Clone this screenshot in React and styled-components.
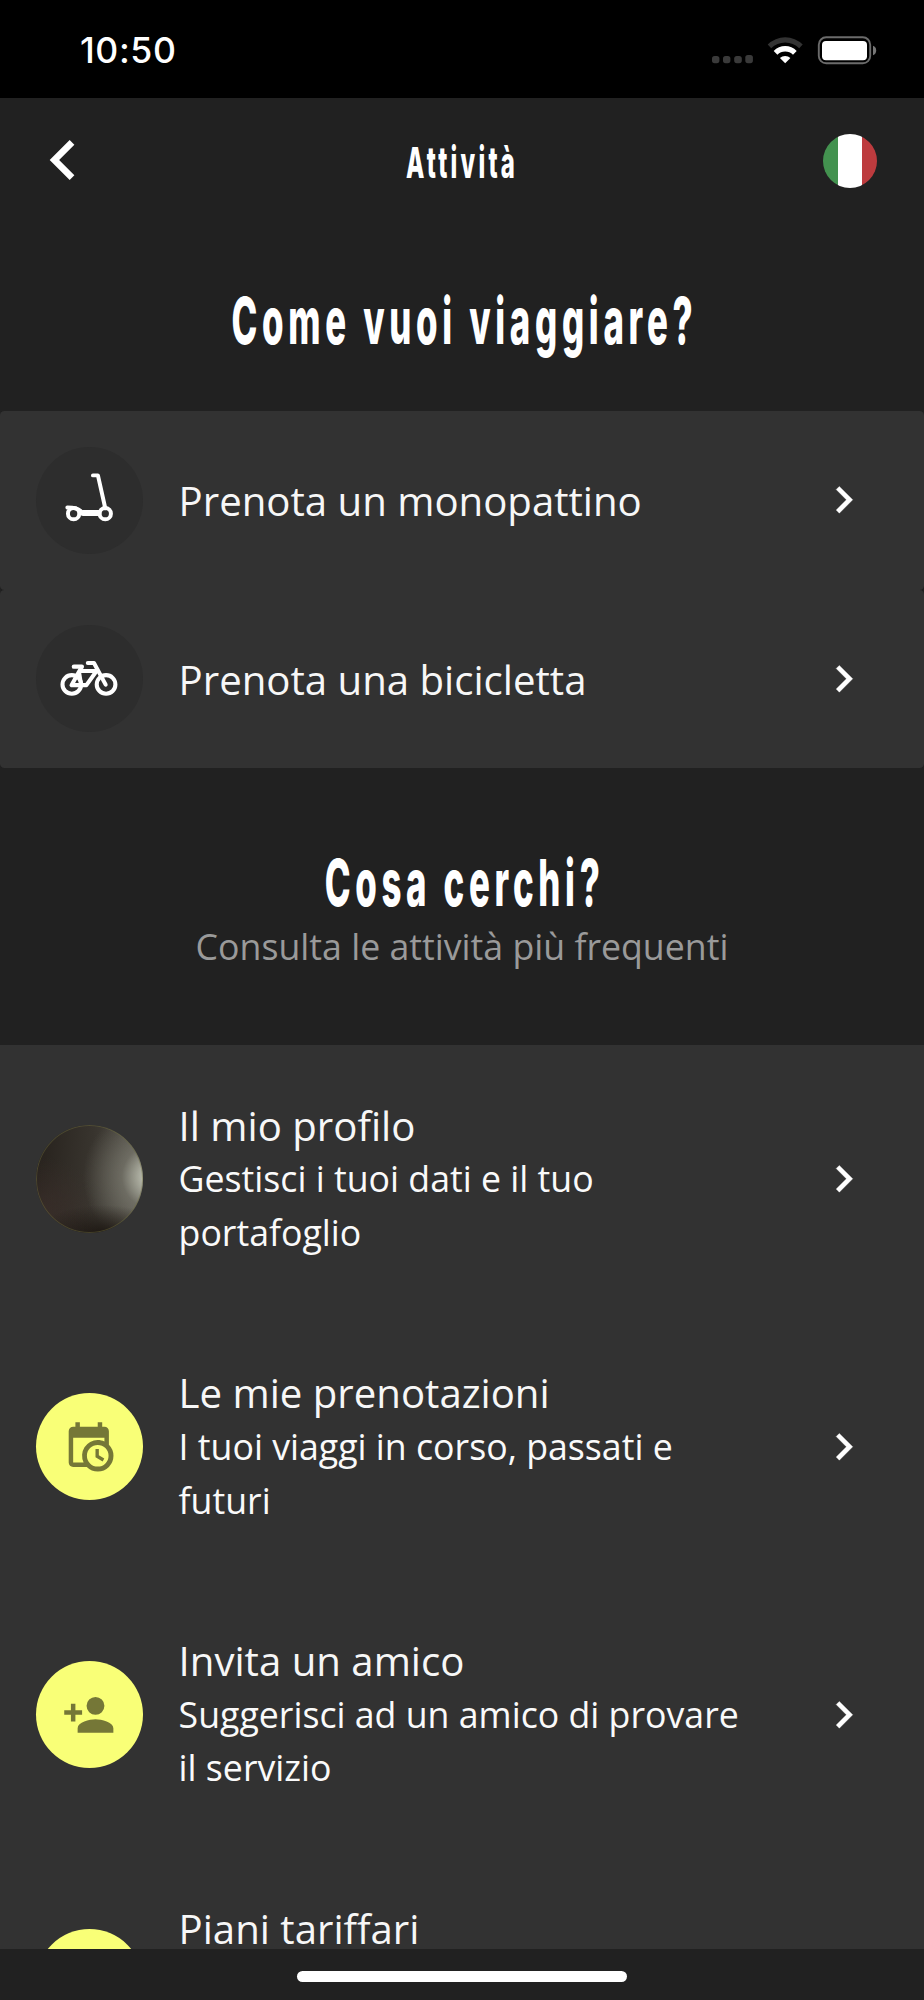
import React from 'react';
import styled, { createGlobalStyle } from 'styled-components';

const GlobalStyle = createGlobalStyle`
  body { margin: 0; background: #212121; }
  * { box-sizing: border-box; }
`;

const Screen = styled.div`
  width: 924px;
  height: 2000px;
  overflow: hidden;
  display: flex;
  flex-direction: column;
  background: #212121;
  color: #fff;
  font-family: 'Open Sans', sans-serif;
`;

const StatusBar = styled.div`
  flex: none;
  height: 98px;
  padding: 4px 47px 0 80px;
  display: flex;
  align-items: center;
  justify-content: space-between;
  background: #000;
`;

const Clock = styled.span`
  font: 550 35.6px/40px Inter, sans-serif;
  letter-spacing: 0.6px;
`;

const Header = styled.header`
  flex: none;
  height: 125px;
  padding: 0 47px 0 23px;
  display: grid;
  grid-template-columns: 80px 1fr 54px;
  align-items: center;
`;

const BackIcon = styled.svg`
  width: 80px;
  height: 80px;
  margin-top: -2px;
  display: block;
`;

const Condensed = styled.span`
  display: inline-block;
  white-space: nowrap;
  font-family: Inter, sans-serif;
  font-weight: 850;
  font-size: ${(p) => p.$size}px;
  line-height: ${(p) => p.$line}px;
  letter-spacing: ${(p) => p.$spacing}px;
  margin-right: ${(p) => -p.$spacing * p.$squeeze}px;
  transform: scaleX(${(p) => p.$squeeze});
`;

const HeaderTitle = styled.div`
  display: flex;
  justify-content: center;
  padding-top: 2px;
  margin-left: -5px;
`;

const Flag = styled.div`
  width: 54px;
  height: 54px;
  border-radius: 50%;
  background: linear-gradient(90deg, #43924f 15px, #fff 15px, #fff 39px, #bd3b3e 39px);
`;

const Section = styled.section`
  flex: none;
  height: ${(p) => p.$height}px;
  padding-top: ${(p) => p.$top}px;
  display: flex;
  flex-direction: column;
  align-items: center;
`;

const Hint = styled.p`
  margin: 2px 0 0;
  font-size: 35.7px;
  line-height: 53.6px;
  color: #9a9a9a;
`;

const Row = styled.div`
  flex: none;
  height: ${(p) => p.$height}px;
  padding: 0 53.6px 0 35.7px;
  display: flex;
  align-items: center;
  background: #323232;
  border-radius: ${(p) => (p.$rounded ? '4.5px' : '0')};
`;

const Badge = styled.div`
  flex: none;
  width: 107.2px;
  height: 107.2px;
  margin-right: 35.7px;
  border-radius: 50%;
  display: flex;
  align-items: center;
  justify-content: center;
  color: ${(p) => (p.$accent ? '#757737' : '#fff')};
  background: ${(p) => (p.$accent ? '#f9ff77' : '#2d2d2d')};
`;

const Avatar = styled(Badge)`
  box-shadow: inset 0 0 0 1px rgba(110, 108, 60, 0.45);
  background:
    radial-gradient(ellipse 62% 28% at 62% 102%, rgba(28, 22, 17, 0.9) 10%, rgba(28, 22, 17, 0)),
    radial-gradient(ellipse 66% 66% at 110% 48%, #c6c9ba 0%, #b4b6a8 16%, rgba(128, 127, 116, 0.65) 45%, rgba(75, 72, 64, 0) 100%),
    radial-gradient(circle at 8% 78%, rgba(60, 47, 43, 0.7), rgba(60, 47, 43, 0) 40%),
    linear-gradient(95deg, #26211c, #38342e 50%, #55534b);
`;

const Labels = styled.div`
  width: 583px;
  padding-top: ${(p) => (p.$single ? 2 : 0)}px;
  line-height: 53.57px;
`;

const Title = styled.div`
  font-size: 40.17px;
  color: #f7f7f7;
`;

const Detail = styled.div`
  min-height: 107.14px;
  font-size: 35.7px;
  color: #fafafa;
`;

const Glyph = styled.svg`
  flex: none;
  display: block;
  overflow: visible;
  width: 53.6px;
  height: 53.6px;
`;

const ChevronIcon = styled(Glyph)`
  margin-left: auto;
`;

const List = styled.div`
  flex: 1;
  min-height: 0;
  overflow: hidden;
  display: flex;
  flex-direction: column;
  background: #323232;
`;

const BottomBar = styled.footer`
  flex: none;
  height: 51.3px;
  padding-top: 22px;
  display: flex;
  justify-content: center;
  background: #212121;
`;

const HomeIndicator = styled.div`
  width: 330px;
  height: 11px;
  border-radius: 6px;
  background: #fff;
`;

const Chevron = () => (
  <ChevronIcon viewBox="0 0 24 24" fill="#fff" stroke="#fff" strokeWidth="0.15" strokeLinejoin="round">
    <path d="M8.59 16.58 13.17 12 8.59 7.41 10 6l6 6-6 6z" />
  </ChevronIcon>
);

const StatusIcons = () => (
  <svg width="166" height="30" viewBox="711 36 166 30">
    <g fill="#3a3a3a">
      <rect x="712" y="56" width="7.4" height="7.2" rx="2.6" />
      <rect x="723" y="56" width="7.4" height="7.2" rx="2.6" />
      <rect x="734.2" y="56" width="7.6" height="7.2" rx="2.6" />
      <rect x="745.3" y="55" width="7.6" height="8.2" rx="2.6" />
    </g>
    <path d="M767.7 44.6A24.8 24.8 0 0 1 802.7 44.6L799.2 48.2A19.8 19.8 0 0 0 771.2 48.2Z" fill="#333" />
    <path d="M773.7 50.9A16.2 16.2 0 0 1 796.7 50.9L793 54.8A11 11 0 0 0 777.4 54.8Z" fill="#fff" />
    <path d="M779.9 58A7.6 7.6 0 0 1 790.4 58L785.2 63.3Z" fill="#fff" />
    <rect x="818.8" y="37.3" width="51.4" height="26" rx="7.4" fill="none" stroke="#6b6b6b" strokeWidth="1.9" />
    <rect x="822" y="41" width="45" height="19.2" rx="4" fill="#fff" />
    <path d="M873 45.8Q876.2 47 876.2 50.5T873 55.2Z" fill="#777" />
  </svg>
);

const Scooter = () => (
  <Glyph viewBox="0 0 54 54" fill="none" stroke="currentColor" strokeLinecap="round" strokeLinejoin="round">
    <path d="M31.2 2.4H36.2L43.6 35.5" strokeWidth="4" />
    <circle cx="11.7" cy="41" r="5.7" strokeWidth="4" />
    <circle cx="43.6" cy="41" r="5.7" strokeWidth="4" />
    <path d="M5.4 34.8C11 34.8 16.5 35.5 19.4 39" strokeWidth="4" />
    <path d="M21.3 40.4H36.6" strokeWidth="6" />
  </Glyph>
);

const Bicycle = () => (
  <Glyph viewBox="0 0 54 54" fill="none" stroke="currentColor" strokeWidth="4.1" strokeLinecap="round" strokeLinejoin="round">
    <circle cx="9.9" cy="32.7" r="9.4" />
    <circle cx="44.4" cy="32.7" r="9.4" />
    <path d="M12 14.8H20" strokeWidth="4.4" />
    <path d="M26 11H32.2L44 32.9" />
    <path d="M19.3 16 16.8 20.5 9.6 33.4H24.6L34.8 19.2H18M17.2 20.5 19.2 33" />
  </Glyph>
);

const CalendarClock = () => (
  <Glyph viewBox="0 0 24 24" fill="currentColor">
    <path d="M15 13h1.5v2.82l2.44 1.41-.75 1.3L15 16.69V13m4-5H5v11h4.67A7 7 0 0 1 16 9c1.07 0 2.09.24 3 .67V8M5 21c-1.11 0-2-.9-2-2V5c0-1.11.89-2 2-2h1V1h2v2h8V1h2v2h1a2 2 0 0 1 2 2v6.1A7 7 0 0 1 11.1 21H5m11-9.85A4.85 4.85 0 1 0 16 20.85 4.85 4.85 0 0 0 16 11.15z" />
  </Glyph>
);

const PersonAdd = () => (
  <Glyph viewBox="0 0 24 24" fill="currentColor">
    <path d="M15 14c-2.67 0-8 1.33-8 4v2h16v-2c0-2.67-5.33-4-8-4m-9-4V7H4v3H1v2h3v3h2v-3h3v-2m6 2a4 4 0 0 0 0-8 4 4 0 0 0 0 8z" />
  </Glyph>
);

const vehicles = [
  { title: 'Prenota un monopattino', Icon: Scooter },
  { title: 'Prenota una bicicletta', Icon: Bicycle },
];

const activities = [
  { title: 'Il mio profilo', detail: 'Gestisci i tuoi dati e il tuo portafoglio' },
  { title: 'Le mie prenotazioni', detail: 'I tuoi viaggi in corso, passati e futuri', Icon: CalendarClock },
  { title: 'Invita un amico', detail: 'Suggerisci ad un amico di provare il servizio', Icon: PersonAdd },
  { title: 'Piani tariffari' },
];

export default function App() {
  return (
    <Screen>
      <GlobalStyle />
      <StatusBar>
        <Clock>10:50</Clock>
        <StatusIcons />
      </StatusBar>
      <Header>
        <BackIcon viewBox="0 0 24 24" fill="#fff">
          <path d="M15.41 16.58 10.83 12l4.58-4.59L14 6l-6 6 6 6z" />
        </BackIcon>
        <HeaderTitle>
          <Condensed $size={43} $line={50} $spacing={5.8} $squeeze={0.555}>Attività</Condensed>
        </HeaderTitle>
        <Flag />
      </Header>
      <Section $height={188} $top={66}>
        <Condensed $size={65} $line={64} $spacing={8.8} $squeeze={0.535}>Come vuoi viaggiare?</Condensed>
      </Section>
      {vehicles.map(({ title, Icon }) => (
        <Row key={title} $height={178.55} $rounded>
          <Badge><Icon /></Badge>
          <Labels $single><Title>{title}</Title></Labels>
          <Chevron />
        </Row>
      ))}
      <Section $height={276.9} $top={80}>
        <Condensed $size={65} $line={70} $spacing={8.8} $squeeze={0.535}>Cosa cerchi?</Condensed>
        <Hint>Consulta le attività più frequenti</Hint>
      </Section>
      <List>
        {activities.map(({ title, detail, Icon }, i) => (
          <Row key={title} $height={267.85}>
            {i === 0 ? <Avatar /> : <Badge $accent>{Icon && <Icon />}</Badge>}
            <Labels>
              <Title>{title}</Title>
              <Detail>{detail}</Detail>
            </Labels>
            <Chevron />
          </Row>
        ))}
      </List>
      <BottomBar><HomeIndicator /></BottomBar>
    </Screen>
  );
}
